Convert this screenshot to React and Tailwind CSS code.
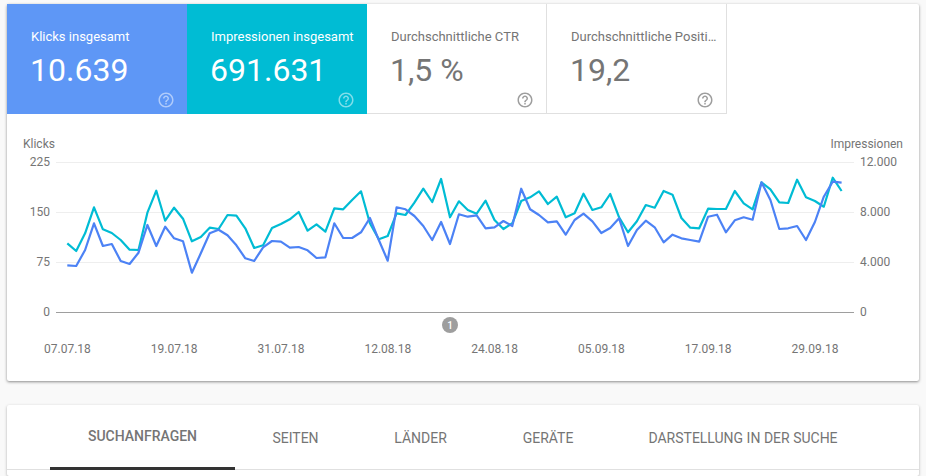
const STEP = 8.9;
const teal = [250,273,220,142,208,219,240,269,270,158,92,182,143,176,244,231,203,207,165,167,205,264,256,204,192,178,156,
212,193,215,145,148,120,94,190,238,228,160,165,128,86,126,57,172,124,150,161,122,180,207,190,123,112,94,132,110,172,160,101,150,142,
102,172,217,184,135,143,93,104,174,203,205,146,147,147,93,130,148,67,88,127,129,59,112,123,140,53,93];
const blue = [316,318,270,190,258,252,303,312,278,195,258,200,235,244,338,280,220,209,226,256,295,303,262,243,245,263,261,
271,294,292,190,234,234,217,174,240,302,142,148,168,198,240,186,252,163,170,166,205,202,183,198,86,148,165,187,184,224,180,161,184,219,
204,175,258,210,182,202,247,224,235,240,245,170,164,217,181,172,179,67,120,207,205,198,240,186,110,65,68];

// Zoomed crop y (3x, crop top at y=160) to chart-local y (chart top at y=162)
const toPoints = (values) =>
  values.map((v, i) => `${(11.3 + i * STEP).toFixed(1)},${(v / 3 - 2).toFixed(1)}`).join(" ");

function HelpIcon({ className }) {
  return (
    <svg viewBox="0 0 24 24" className={className} fill="currentColor" aria-hidden="true">
      <path d="M11 18h2v-2h-2v2zm1-16C6.48 2 2 6.48 2 12s4.48 10 10 10 10-4.48 10-10S17.52 2 12 2zm0 18c-4.41 0-8-3.59-8-8s3.59-8 8-8 8 3.59 8 8-3.59 8-8 8zm0-14c-2.21 0-4 1.79-4 4h2c0-1.1.9-2 2-2s2 .9 2 2c0 2-3 1.75-3 5h2c0-2.25 3-2.5 3-5 0-2.21-1.79-4-4-4z" />
    </svg>
  );
}

function Tile({ label, value, className, iconClass }) {
  return (
    <div className={`flex h-[110px] w-[180px] shrink-0 flex-col pl-6 pr-[12px] ${className}`}>
      <div className="-mr-[3px] mt-[23px] truncate text-[13px] leading-[20px]">{label}</div>
      <div className="-ml-px mt-[3px] text-[32px] leading-[40px]">{value}</div>
      <HelpIcon className={`mt-[1px] h-[18px] w-[18px] self-end ${iconClass}`} />
    </div>
  );
}

const dates = ["07.07.18","19.07.18","31.07.18","12.08.18","24.08.18","05.09.18","17.09.18","29.09.18"];
const tabs = [
  ["SUCHANFRAGEN", "w-[185px] border-b-[3px] border-[#333333] font-medium"],
  ["SEITEN", "w-[121px]"],
  ["LÄNDER", "w-[129px]"],
  ["GERÄTE", "w-[126px]"],
  ["DARSTELLUNG IN DER SUCHE", "w-[264px]"],
];

export default function App() {
  return (
    <div className="flex h-[476px] flex-col gap-6 overflow-hidden bg-[#f9f9f9] px-[7px] pt-1 font-['Roboto',sans-serif] text-[#757575]">
      <div className="relative h-[377px] shrink-0 rounded-[2px] bg-white shadow-[0_1px_3px_rgba(0,0,0,0.45)]">
        <div className="flex">
          <Tile label="Klicks insgesamt" value="10.639" className="bg-[#5e97f6] text-white" iconClass="text-white/50" />
          <Tile label="Impressionen insgesamt" value="691.631" className="bg-[#00bcd4] text-white" iconClass="text-white/50" />
          <Tile label="Durchschnittliche CTR" value="1,5 %" className="border-b border-r border-[#e0e0e0]" iconClass="text-[#9e9e9e]" />
          <Tile label="Durchschnittliche Position" value="19,2" className="border-b border-r border-[#e0e0e0]" iconClass="text-[#9e9e9e]" />
        </div>

        <div className="flex h-[48px] items-end justify-between pb-[11px] pl-4 pr-4 text-xs leading-[14px]">
          <span>Klicks</span>
          <span>Impressionen</span>
        </div>

        <div className="flex h-[150px] text-xs">
          <div className="relative w-[49px] shrink-0">
            {[["225","top-0"],["150","top-[50px]"],["75","top-[100px]"],["0","top-[150px]"]].map(([t, pos]) => (
              <span key={t} className={`absolute right-[6px] -translate-y-1/2 leading-[14px] ${pos}`}>{t}</span>
            ))}
          </div>
          <svg width="798" height="150" className="shrink-0 overflow-visible" aria-hidden="true">
            <line x1="0" x2="798" y1="0.5" y2="0.5" stroke="#eeeeee" />
            <line x1="0" x2="798" y1="50.5" y2="50.5" stroke="#eeeeee" />
            <line x1="0" x2="798" y1="100.5" y2="100.5" stroke="#eeeeee" />
            <line x1="0" x2="798" y1="150.5" y2="150.5" stroke="#9e9e9e" />
            <polyline points={toPoints(teal)} fill="none" stroke="#00bcd4" strokeWidth="2.2" strokeLinejoin="round" />
            <polyline points={toPoints(blue)} fill="none" stroke="#4c82f5" strokeWidth="2.2" strokeLinejoin="round" />
          </svg>
          <div className="relative flex-1">
            {[["12.000","top-0"],["8.000","top-[50px]"],["4.000","top-[100px]"],["0","top-[150px]"]].map(([t, pos]) => (
              <span key={t} className={`absolute left-[6px] -translate-y-1/2 leading-[14px] ${pos}`}>{t}</span>
            ))}
          </div>
        </div>

        <div className="mt-[30px] flex pl-[7px] text-xs leading-[14px]">
          {dates.map((d) => (
            <span key={d} className="w-[106.8px] shrink-0 text-center">{d}</span>
          ))}
        </div>

        <div className="absolute left-[435px] top-[313px] flex h-4 w-4 items-center justify-center rounded-full bg-[#9e9e9e] text-[10px] font-medium text-white">1</div>
      </div>

      <div className="flex-1 rounded-[2px] bg-white shadow-[0_1px_3px_rgba(0,0,0,0.3)]">
        <div className="flex h-[65px] border-b border-[#e0e0e0] pl-[43px]">
          {tabs.map(([t, cls]) => (
            <div key={t} className={`-mb-px flex h-[65px] shrink-0 items-center justify-center text-sm ${cls}`}>{t}</div>
          ))}
        </div>
      </div>
    </div>
  );
}
